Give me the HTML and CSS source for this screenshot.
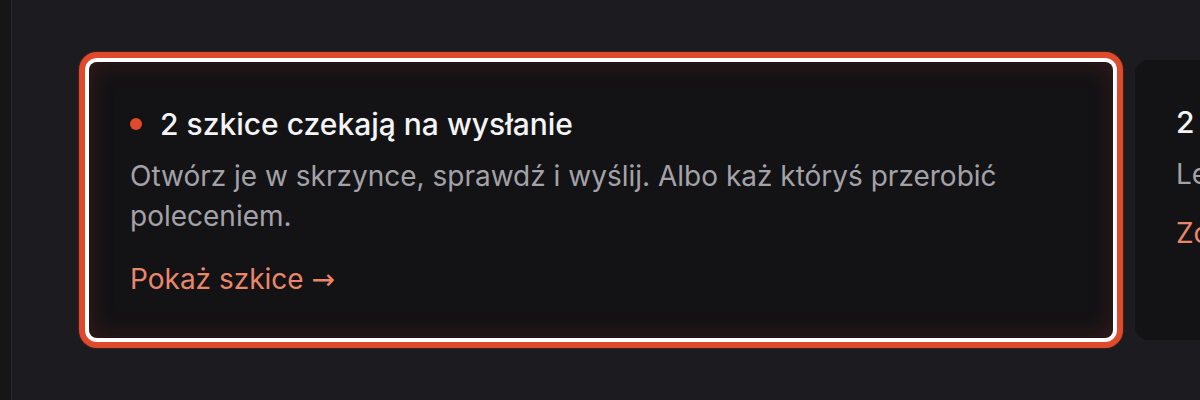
FILE: index.html
```html
<!DOCTYPE html>
<html lang="pl">
<head>
<meta charset="utf-8">
<title>Szkice</title>
<link rel="stylesheet" href="styles.css">
</head>
<body>
  <aside class="sidebar"></aside>
  <main class="main">
    <div class="cards">
      <section class="card card--active">
        <h2 class="card-title"><span class="dot"></span>2 szkice czekają na wysłanie</h2>
        <p class="card-text">Otwórz je w skrzynce, sprawdź i wyślij. Albo każ któryś przerobić poleceniem.</p>
        <a class="card-link" href="#">Pokaż szkice <span class="arrow">→</span></a>
      </section>
      <section class="card">
        <h2 class="card-title">2 leady czekają na odpowiedź</h2>
        <p class="card-text">Leady z ostatniego tygodnia bez odpowiedzi.</p>
        <a class="card-link card-link--tight" href="#">Zobacz leady <span class="arrow">→</span></a>
      </section>
    </div>
  </main>
</body>
</html>
```

FILE: styles.css
```css
html, body {
  margin: 0;
  height: 100%;
}
body {
  display: flex;
  background: #1c1b20;
  font-family: Inter, "Noto Sans", sans-serif;
  overflow: hidden;
}
.sidebar {
  width: 11px;
  flex-shrink: 0;
  background: #161518;
  border-right: 1px solid #2b2a2f;
}
.main {
  flex: 1;
  padding: 60px 0 0 77px;
  min-width: 0;
}
.cards {
  display: flex;
  align-items: center;
  gap: 22px;
}
.card {
  flex-shrink: 0;
  width: 1024px;
  height: 280px;
  box-sizing: border-box;
  padding: 44px 41px;
  background: #131215;
  border-radius: 14px;
}
.card--active {
  height: 276px;
  padding-top: 44px;
  border-radius: 8px;
  box-shadow:
    inset 0 0 26px rgba(224, 74, 44, 0.18),
    0 0 0 4px #ffffff,
    0 0 0 10px #e04a2c,
    0 0 2px 10px rgba(224, 74, 44, 0.5);
}
.card-title {
  display: flex;
  align-items: center;
  gap: 18px;
  margin: 0;
  font-size: 30px;
  line-height: 36px;
  font-weight: 500;
  color: #f4f4f6;
}
.dot {
  width: 12px;
  height: 12px;
  border-radius: 50%;
  background: #e04a2c;
  flex-shrink: 0;
}
.card-text {
  margin: 14px 0 0;
  font-size: 28px;
  line-height: 40px;
  color: #a3a2a9;
}
.card-link {
  display: inline-block;
  margin-top: 26px;
  font-size: 28px;
  line-height: 34px;
  color: #ea8669;
  text-decoration: none;
}
.card-link--tight {
  margin-top: 22px;
}
.arrow {
  font-family: "DejaVu Sans", sans-serif;
  font-size: 28px;
}
```
